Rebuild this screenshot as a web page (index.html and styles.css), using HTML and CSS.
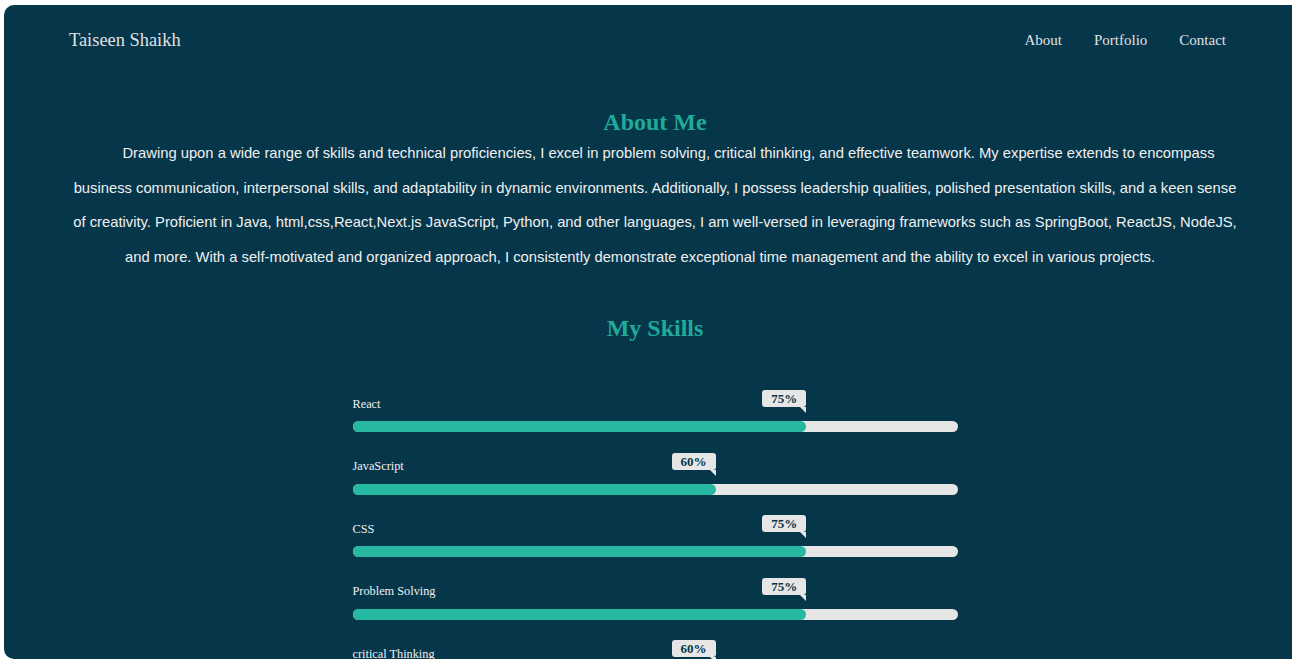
FILE: index.html
```html
<!DOCTYPE html>
<html lang="en">
<head>
<meta charset="utf-8">
<title>Taiseen Shaikh</title>
<link rel="stylesheet" href="styles.css">
</head>
<body>
<div class="page">
  <header class="topbar">
    <a class="logo" href="#">Taiseen Shaikh</a>
    <nav class="nav">
      <a href="#">About</a>
      <a href="#">Portfolio</a>
      <a href="#">Contact</a>
    </nav>
  </header>

  <section class="about">
    <h2 class="title">About Me</h2>
    <p class="about-text">Drawing upon a wide range of skills and technical proficiencies, I excel in problem solving, critical thinking, and effective teamwork. My expertise extends to encompass business communication, interpersonal skills, and adaptability in dynamic environments. Additionally, I possess leadership qualities, polished presentation skills, and a keen sense of creativity. Proficient in Java, html,css,React,Next.js JavaScript, Python, and other languages, I am well-versed in leveraging frameworks such as SpringBoot, ReactJS, NodeJS, and more. With a self-motivated and organized approach, I consistently demonstrate exceptional time management and the ability to excel in various projects.<span class="trail"></span></p>
  </section>

  <section class="skills">
    <h2 class="title skills-title">My Skills</h2>
    <div class="skill-list">
      <div class="skill">
        <span class="skill-name">React</span>
        <div class="bar"><div class="fill" style="width:75%"><span class="tip">75%</span></div></div>
      </div>
      <div class="skill">
        <span class="skill-name">JavaScript</span>
        <div class="bar"><div class="fill" style="width:60%"><span class="tip">60%</span></div></div>
      </div>
      <div class="skill">
        <span class="skill-name">CSS</span>
        <div class="bar"><div class="fill" style="width:75%"><span class="tip">75%</span></div></div>
      </div>
      <div class="skill">
        <span class="skill-name">Problem Solving</span>
        <div class="bar"><div class="fill" style="width:75%"><span class="tip">75%</span></div></div>
      </div>
      <div class="skill">
        <span class="skill-name">critical Thinking</span>
        <div class="bar"><div class="fill" style="width:60%"><span class="tip">60%</span></div></div>
      </div>
    </div>
  </section>
</div>
</body>
</html>
```

FILE: styles.css
```css
html, body {
  margin: 0;
  padding: 0;
  overflow: hidden;
  background: #ffffff;
}

.page {
  margin: 5px 0 0 4px;
  width: 1302px;
  height: 654px;
  background: #06364a;
  border-radius: 10px 0 0 10px;
  overflow: hidden;
  font-family: "Liberation Serif", "Times New Roman", serif;
}

.topbar {
  height: 70px;
  display: flex;
  align-items: center;
  justify-content: space-between;
  padding: 0 64px 0 65px;
}

.logo {
  color: #e0e0e0;
  text-decoration: none;
  font-size: 18.4px;
}

.nav {
  display: flex;
}

.nav a {
  color: #e0e0e0;
  text-decoration: none;
  font-size: 15px;
  padding: 0 16px;
}

.title {
  margin: 0;
  text-align: center;
  font-size: 24px;
  line-height: 28px;
  font-weight: bold;
  color: #22aa98;
}

.about .title {
  margin-top: 33px;
}

.about-text {
  margin: 0 auto;
  width: 1172px;
  text-align: center;
  text-indent: 27px;
  font-family: "Liberation Sans", Arial, sans-serif;
  font-size: 14.78px;
  line-height: 34.5px;
  color: #f0f0f0;
}

.trail {
  display: inline-block;
  width: 30px;
}

.skills-title {
  margin-top: 40px;
}

.skill-list {
  width: 605px;
  margin: 54.5px auto 0;
}

.skill {
  margin-bottom: 27px;
}

.skill-name {
  display: block;
  font-size: 12.3px;
  line-height: 15px;
  color: #f0f0f0;
  margin-bottom: 9.5px;
}

.bar {
  height: 11px;
  border-radius: 6px;
  background: #e6e6e6;
}

.fill {
  position: relative;
  height: 100%;
  border-radius: 6px;
  background: #26b8a1;
}

.tip {
  position: absolute;
  right: 0;
  bottom: calc(100% + 14px);
  padding: 0 9px;
  height: 17px;
  line-height: 17px;
  border-radius: 3px;
  background: #e6e6e6;
  color: #06364a;
  font-size: 13px;
  font-weight: bold;
}

.tip::after {
  content: "";
  position: absolute;
  right: 0;
  top: 100%;
  border-top: 6px solid #e6e6e6;
  border-left: 6px solid transparent;
}
```
